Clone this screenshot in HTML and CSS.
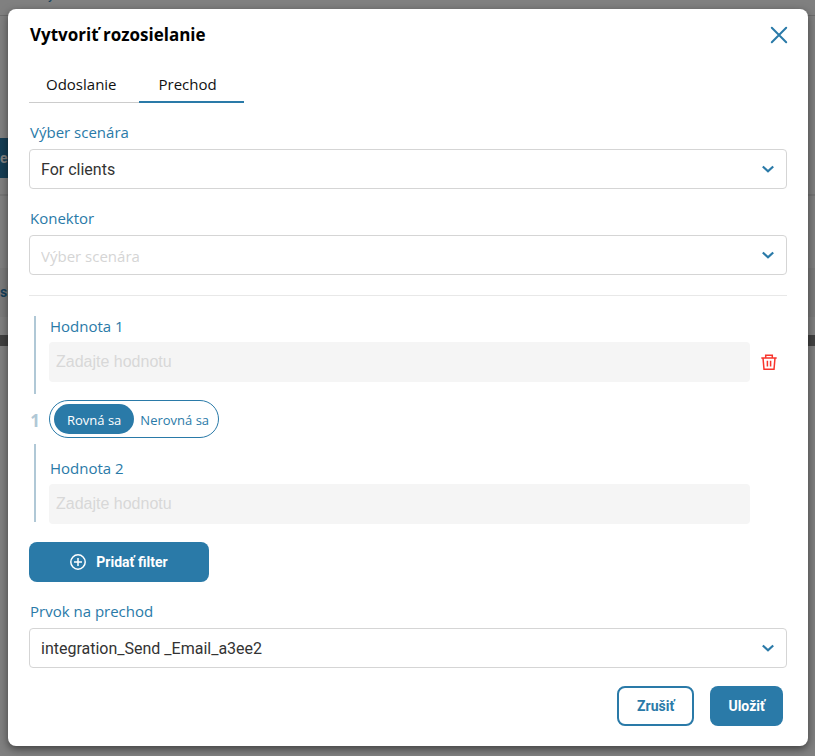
FILE: index.html
```html
<!DOCTYPE html>
<html lang="sk">
<head>
<meta charset="utf-8">
<meta name="viewport" content="width=device-width, initial-scale=1">
<title>Vytvoriť rozosielanie</title>
<link rel="stylesheet" href="styles.css">
</head>
<body>
<div class="backdrop" aria-hidden="true">
  <div class="backdrop-bar"><span>y</span></div>
  <div class="backdrop-tab"><span>e</span></div>
  <div class="backdrop-line"></div>
  <div class="backdrop-row"><span>sl</span></div>
  <div class="backdrop-scroll"></div>
</div>
<main class="modal" role="dialog" aria-labelledby="title">
  <header class="modal-header">
    <h1 id="title">Vytvoriť rozosielanie</h1>
    <button class="close" type="button" aria-label="Zavrieť">
      <svg viewBox="0 0 16 16"><path d="M.8.8l14.400 14.400M15.200.8L.8 15.200"/></svg>
    </button>
  </header>
  <nav class="tabs" role="tablist">
    <button class="tab" type="button" role="tab">Odoslanie</button>
    <button class="tab tab-active" type="button" role="tab" aria-selected="true">Prechod</button>
  </nav>
  <form>
    <div class="field">
      <label for="scenario">Výber scenára</label>
      <div class="select">
        <select id="scenario"><option>For clients</option></select>
        <svg viewBox="0 0 12 8"><path d="M.8 1.500L6 6.300l5.200-4.800"/></svg>
      </div>
    </div>
    <div class="field">
      <label for="connector">Konektor</label>
      <div class="select">
        <select id="connector" class="empty"><option>Výber scenára</option></select>
        <svg viewBox="0 0 12 8"><path d="M.8 1.500L6 6.300l5.200-4.800"/></svg>
      </div>
    </div>
    <hr>
    <section class="filter">
      <div class="rail"></div>
      <div class="value">
        <label for="value1">Hodnota 1</label>
        <input id="value1" type="text" placeholder="Zadajte hodnotu">
      </div>
      <button class="delete" type="button" aria-label="Odstrániť">
        <svg viewBox="0 0 16 16"><path d="M.3 4h15.400M4.700 4V1.200h6.600V4M2 4l1 11.200h10L14 4M6.400 6.800v5.700M9.600 6.800v5.700"/></svg>
      </button>
      <span class="number">1</span>
      <div class="toggle">
        <button class="option option-active" type="button" aria-pressed="true">Rovná sa</button>
        <button class="option" type="button">Nerovná sa</button>
      </div>
      <div class="rail"></div>
      <div class="value">
        <label for="value2">Hodnota 2</label>
        <input id="value2" type="text" placeholder="Zadajte hodnotu">
      </div>
    </section>
    <button class="button add" type="button">
      <svg viewBox="0 0 16 16"><circle cx="8" cy="8" r="7.200"/><path d="M8 4v8M4 8h8"/></svg>
      Pridať filter
    </button>
    <div class="field">
      <label for="target">Prvok na prechod</label>
      <div class="select">
        <select id="target"><option>integration_Send _Email_a3ee2</option></select>
        <svg viewBox="0 0 12 8"><path d="M.8 1.500L6 6.300l5.200-4.800"/></svg>
      </div>
    </div>
    <footer class="actions">
      <button class="button outline" type="button">Zrušiť</button>
      <button class="button" type="submit">Uložiť</button>
    </footer>
  </form>
</main>
</body>
</html>
```
FILE: styles.css
```css
:root {
  --blue: #2a7aa8;
  --ui: "Segoe UI", "Open Sans", sans-serif;
}
* { box-sizing: border-box; }
body {
  margin: 0;
  min-height: 100vh;
  padding: 9px 7px 10px 8px;
  background: #808080;
  font-family: var(--ui);
  font-size: 15px;
  line-height: 22px;
}
button, input, select { font: inherit; margin: 0; }
button { cursor: pointer; }
svg { fill: none; stroke: currentColor; display: block; }

/* Dimmed page that lies under the dialog */
.backdrop { position: absolute; inset: 0; overflow: hidden; color: #15405a; font: bold 14px/20px Roboto, sans-serif; }
.backdrop-bar { display: flex; align-items: flex-start; height: 16px; border-bottom: 1px solid #6c6c6c; padding-left: 48px; font-weight: 400; }
.backdrop-bar span { margin-top: -16px; }
.backdrop-tab { width: 60px; height: 40px; margin-top: 122px; background: #153d54; color: #808080; line-height: 40px; }
.backdrop-line { height: 2px; margin-top: 16px; background: #757575; }
.backdrop-row { height: 49px; margin-top: 72px; background: #7b7b7b; line-height: 49px; }
.backdrop-scroll { height: 11px; margin-top: 18px; background: #414141; }

.modal {
  position: relative;
  padding: 14px 21px 20px;
  border-radius: 8px;
  background: #fff;
  box-shadow: 0 3px 8px rgba(0, 0, 0, .5);
}
.modal-header { display: flex; justify-content: space-between; align-items: center; height: 24px; }
h1 { margin: 0 1px; font-size: 17px; line-height: 24px; font-weight: 700; color: #000; }
.close { padding: 0; border: 0; background: none; color: var(--blue); }
.close svg { width: 16px; height: 16px; stroke-width: 2; stroke-linecap: round; overflow: visible; }

.tabs { display: flex; margin: 19px 0 18px; }
.tab { height: 37px; padding: 0 22px 0 17px; border: 0; border-bottom: 1px solid #ccc; background: none; color: #111; }
.tab-active { padding: 0 27px 0 20px; border-bottom: 2px solid var(--blue); }

.field label, .value label { display: block; padding: 0 1px; color: var(--blue); }
.field { margin-bottom: 18px; }
.field label { margin-bottom: 6px; }
.select { position: relative; }
.select select {
  display: block;
  width: 100%;
  height: 40px;
  padding: 2px 36px 0 11px;
  appearance: none;
  border: 1px solid #d5d5d5;
  border-radius: 4px;
  background: #fff;
  color: #333;
  font-family: Roboto, sans-serif;
  font-size: 16px;
}
.select .empty { color: #d5d5d5; font-family: var(--ui); font-size: 15px; }
.select svg { position: absolute; right: 13px; top: 16px; width: 12px; height: 8px; color: var(--blue); stroke-width: 2.200; pointer-events: none; }
hr { margin: 20px 0; border: 0; border-top: 1px solid #e8e8e8; }

.filter {
  display: grid;
  grid-template-columns: 12px 1fr 29px;
  column-gap: 8px;
  row-gap: 6px;
}
.rail { justify-self: center; width: 2px; height: 78px; background: #b0c8d6; }
.value { grid-column: 2; }
.value:last-child { padding-top: 14px; }
.value label { line-height: 20px; }
.value input {
  display: block;
  width: 100%;
  height: 40px;
  margin-top: 6px;
  padding: 0 7px;
  border: 0;
  border-radius: 4px;
  background: #f5f5f5;
  font-family: "Liberation Sans", sans-serif;
  font-size: 16px;
}
.value input::placeholder { color: #d8d8d8; opacity: 1; }
.delete { justify-self: start; align-self: end; height: 40px; margin: 0 0 12px 3px; padding: 0; border: 0; background: none; color: #f8352c; }
.delete svg { width: 16px; height: 16px; stroke-width: 1.500; }
.number { align-self: end; line-height: 34px; text-align: center; color: #b0c8d6; font-size: 17px; font-weight: 700; }
.toggle {
  grid-column: 2 / 4;
  justify-self: start;
  display: flex;
  height: 38px;
  padding: 3px 4px;
  border: 1px solid var(--blue);
  border-radius: 19px;
}
.option { height: 30px; padding: 2px 5px 0 6px; border: 0; border-radius: 15px; background: none; color: var(--blue); font-size: 13px; }
.option-active { padding: 2px 13px 0; background: var(--blue); color: #fff; }

.button {
  height: 40px;
  padding: 0 18px;
  border: 0;
  border-radius: 8px;
  background: var(--blue);
  color: #fff;
  font: bold 14px/20px Roboto, sans-serif;
}
.add { display: flex; align-items: center; justify-content: center; gap: 10px; width: 180px; margin: 18px 0; }
.add svg { width: 16px; height: 16px; stroke-width: 1.500; }
.outline { border: 2px solid var(--blue); background: #fff; color: var(--blue); }
.actions { display: flex; justify-content: flex-end; gap: 16px; padding-right: 4px; }
```
